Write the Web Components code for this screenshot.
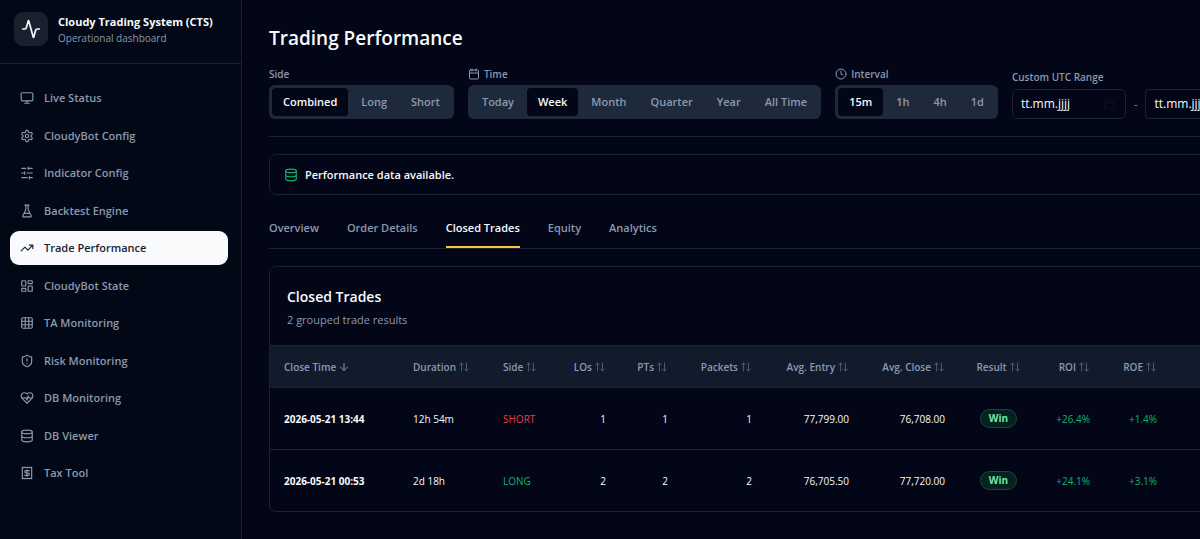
<!DOCTYPE html>
<html lang="en">
<head>
<meta charset="utf-8">
<meta name="viewport" content="width=device-width, initial-scale=1">
<title>Cloudy Trading System</title>
<style>
  :root {
    --bg: #020617;
    --side-bg: #020815;
    --line: #1b2333;
    --raised: #1e293b;
    --head-bg: #121b2b;
    --text: #f8fafc;
    --muted: #8b99af;
    --green: #10b370;
    --red: #e8393f;
    --accent: #f5c842;
  }
  html, body { height: 100%; }
  body {
    margin: 0;
    background: var(--bg);
    color: var(--text);
    font: 400 11px/18px "Open Sans", "Noto Sans", sans-serif;
    overflow: hidden;
  }
</style>
</head>
<body>
<app-shell>
  <side-nav slot="side">
    <nav-item icon="monitor">Live Status</nav-item>
    <nav-item icon="settings">CloudyBot Config</nav-item>
    <nav-item icon="sliders">Indicator Config</nav-item>
    <nav-item icon="flask">Backtest Engine</nav-item>
    <nav-item icon="trending" active>Trade Performance</nav-item>
    <nav-item icon="dashboard">CloudyBot State</nav-item>
    <nav-item icon="grid">TA Monitoring</nav-item>
    <nav-item icon="shield">Risk Monitoring</nav-item>
    <nav-item icon="heart">DB Monitoring</nav-item>
    <nav-item icon="database">DB Viewer</nav-item>
    <nav-item icon="receipt">Tax Tool</nav-item>
  </side-nav>
  <page-header>
    <span slot="title">Trading Performance</span>
    <segment-group label="Side" options="Combined,Long,Short" selected="Combined"></segment-group>
    <segment-group label="Time" icon="calendar" options="Today,Week,Month,Quarter,Year,All Time" selected="Week"></segment-group>
    <segment-group label="Interval" icon="clock" options="15m,1h,4h,1d" selected="15m"></segment-group>
    <date-range label="Custom UTC Range"></date-range>
  </page-header>
  <status-banner icon="database">Performance data available.</status-banner>
  <tab-bar tabs="Overview,Order Details,Closed Trades,Equity,Analytics" selected="Closed Trades"></tab-bar>
  <data-card>
    <span slot="title">Closed Trades</span>
    <span slot="subtitle">2 grouped trade results</span>
    <trades-table></trades-table>
  </data-card>
</app-shell>

<script>
const ICONS = {
  activity: '<path d="M22 12h-2.48a2 2 0 0 0-1.93 1.46l-2.35 8.36a.25.25 0 0 1-.48 0L9.24 2.18a.25.25 0 0 0-.48 0l-2.35 8.36A2 2 0 0 1 4.49 12H2"/>',
  monitor: '<rect width="20" height="14" x="2" y="3" rx="2"/><path d="M8 21h8M12 17v4"/>',
  settings: '<path d="M12.22 2h-.44a2 2 0 0 0-2 2v.18a2 2 0 0 1-1 1.73l-.43.25a2 2 0 0 1-2 0l-.15-.08a2 2 0 0 0-2.73.73l-.22.38a2 2 0 0 0 .73 2.73l.15.1a2 2 0 0 1 1 1.72v.51a2 2 0 0 1-1 1.74l-.15.09a2 2 0 0 0-.73 2.73l.22.38a2 2 0 0 0 2.73.73l.15-.08a2 2 0 0 1 2 0l.43.25a2 2 0 0 1 1 1.73V20a2 2 0 0 0 2 2h.44a2 2 0 0 0 2-2v-.18a2 2 0 0 1 1-1.73l.43-.25a2 2 0 0 1 2 0l.15.08a2 2 0 0 0 2.73-.73l.22-.39a2 2 0 0 0-.73-2.73l-.15-.08a2 2 0 0 1-1-1.74v-.5a2 2 0 0 1 1-1.74l.15-.09a2 2 0 0 0 .73-2.73l-.22-.38a2 2 0 0 0-2.73-.73l-.15.08a2 2 0 0 1-2 0l-.43-.25a2 2 0 0 1-1-1.73V4a2 2 0 0 0-2-2z"/><circle cx="12" cy="12" r="3"/>',
  sliders: '<path d="M21 4h-7M10 4H3M21 12h-9M8 12H3M21 20h-5M12 20H3M14 2v4M8 10v4M16 18v4"/>',
  flask: '<path d="M10 2v7.53a2 2 0 0 1-.21.9L4.72 20.55a1 1 0 0 0 .9 1.45h12.76a1 1 0 0 0 .9-1.45l-5.07-10.13a2 2 0 0 1-.21-.9V2M8.5 2h7M7 16h10"/>',
  trending: '<path d="m22 7-8.5 8.5-5-5L2 17M16 7h6v6"/>',
  dashboard: '<rect width="7" height="9" x="3" y="3" rx="1"/><rect width="7" height="5" x="14" y="3" rx="1"/><rect width="7" height="9" x="14" y="12" rx="1"/><rect width="7" height="5" x="3" y="16" rx="1"/>',
  grid: '<rect width="18" height="18" x="3" y="3" rx="2"/><path d="M3 9h18M3 15h18M9 3v18M15 3v18"/>',
  shield: '<path d="M20 13c0 5-3.5 7.5-7.66 8.95a1 1 0 0 1-.67-.01C7.5 20.5 4 18 4 13V6a1 1 0 0 1 1-1c2 0 4.5-1.2 6.24-2.72a1.17 1.17 0 0 1 1.52 0C14.51 3.81 17 5 19 5a1 1 0 0 1 1 1zM12 8v4M12 16h.01"/>',
  heart: '<path d="M19 14c1.49-1.46 3-3.21 3-5.5A5.5 5.5 0 0 0 16.5 3c-1.76 0-3 .5-4.5 2-1.5-1.5-2.74-2-4.5-2A5.5 5.5 0 0 0 2 8.5c0 2.3 1.5 4.05 3 5.5l7 7Z"/><path d="M3.22 12H9.5l.5-1 2 4.5 2-7 1.5 3.5h5.27"/>',
  database: '<ellipse cx="12" cy="5" rx="9" ry="3"/><path d="M3 5v14a9 3 0 0 0 18 0V5M3 12a9 3 0 0 0 18 0"/>',
  receipt: '<path d="M4 2v20l2-1 2 1 2-1 2 1 2-1 2 1 2-1 2 1V2l-2 1-2-1-2 1-2-1-2 1-2-1-2 1ZM16 8h-6a2 2 0 1 0 0 4h4a2 2 0 1 1 0 4H8M12 17.5v-11"/>',
  calendar: '<path d="M8 2v4M16 2v4M3 10h18"/><rect width="18" height="18" x="3" y="4" rx="2"/>',
  clock: '<circle cx="12" cy="12" r="10"/><path d="M12 6v6l4 2"/>',
  sort: '<path d="m21 16-4 4-4-4M17 20V4M3 8l4-4 4 4M7 4v16"/>',
  down: '<path d="M12 5v14M19 12l-7 7-7-7"/>'
};

class Base extends HTMLElement {
  connectedCallback() {
    if (this.shadowRoot) return;
    this.attachShadow({ mode: 'open' }).innerHTML =
      '<style>:host,*{box-sizing:border-box}button,input{font:inherit;color:inherit}' + this.css() + '</style>' + this.html();
  }
  list(name) { return this.getAttribute(name).split(','); }
}

customElements.define('ui-icon', class extends Base {
  css() { return `
    :host { display: inline-flex; flex: none; width: 14px; height: 14px; }
    svg { width: 100%; height: 100%; fill: none; stroke: currentColor; stroke-width: 2; stroke-linecap: round; stroke-linejoin: round; }`; }
  html() { return `<svg viewBox="0 0 24 24" aria-hidden="true">${ICONS[this.getAttribute('name')]}</svg>`; }
});

customElements.define('app-shell', class extends Base {
  css() { return `
    :host { display: grid; grid-template-columns: 242px minmax(0, 1fr); min-height: 100%; }
    main { padding: 24px 0 24px 27px; overflow: hidden; }
    .wide { min-width: 1120px; }`; }
  html() { return `<slot name="side"></slot><main><div class="wide"><slot></slot></div></main>`; }
});

customElements.define('side-nav', class extends Base {
  css() { return `
    :host { display: block; background: var(--side-bg); border-right: 1px solid var(--line); }
    header { display: flex; align-items: center; gap: 10px; height: 64px; padding: 0 14px 5px; border-bottom: 1px solid var(--line); }
    .logo { display: grid; place-items: center; width: 34px; height: 34px; border-radius: 9px; background: #1a202d; }
    .logo ui-icon { width: 20px; height: 20px; }
    .brand { display: grid; padding-top: 2px; white-space: nowrap; line-height: 16px; }
    strong { font-size: 11px; font-weight: 700; }
    small { font-size: 10px; color: var(--muted); }
    nav { display: grid; align-content: space-between; height: 409px; margin: 17px 13px 0 10px; }`; }
  html() { return `
    <header><span class="logo"><ui-icon name="activity"></ui-icon></span>
      <span class="brand"><strong>Cloudy Trading System (CTS)</strong><small>Operational dashboard</small></span></header>
    <nav><slot></slot></nav>`; }
});

customElements.define('nav-item', class extends Base {
  css() { return `
    :host { display: block; }
    a { display: flex; align-items: center; gap: 10px; height: 34px; padding: 0 10px; border-radius: 9px;
        color: var(--muted); font-weight: 600; text-decoration: none; white-space: nowrap; }
    :host([active]) a { background: var(--text); color: #1b2436; }`; }
  html() { return `<a href="#"${this.hasAttribute('active') ? ' aria-current="page"' : ''}><ui-icon name="${this.getAttribute('icon')}"></ui-icon><span><slot></slot></span></a>`; }
});

customElements.define('page-header', class extends Base {
  css() { return `
    :host { display: block; border-bottom: 1px solid var(--line); padding-bottom: 17px; }
    h1 { margin: 0 0 14px; font-size: 19px; line-height: 29px; font-weight: 600; }
    .filters { display: flex; align-items: flex-end; gap: 14px; }`; }
  html() { return `<h1><slot name="title"></slot></h1><div class="filters"><slot></slot></div>`; }
});

customElements.define('segment-group', class extends Base {
  css() { return `
    :host { display: grid; gap: 4px; flex: none; }
    .label { display: flex; align-items: center; gap: 4px; height: 14px; font-size: 10px; font-weight: 600; color: var(--muted); }
    .label ui-icon { width: 12px; height: 12px; }
    .group { display: flex; gap: 2px; padding: 3px; border-radius: 6px; background: var(--raised); }
    button { height: 28px; padding: 0 11px; border: 0; border-radius: 4px; background: none; color: var(--muted); font-weight: 600; white-space: nowrap; }
    button[aria-pressed=true] { background: var(--bg); color: var(--text); }`; }
  html() {
    const icon = this.getAttribute('icon'), sel = this.getAttribute('selected');
    return `<span class="label" id="l">${icon ? `<ui-icon name="${icon}"></ui-icon>` : ''}<span>${this.getAttribute('label')}</span></span>
      <div class="group" role="group" aria-labelledby="l">${this.list('options').map(o => `<button type="button" aria-pressed="${o === sel}">${o}</button>`).join('')}</div>`;
  }
});

customElements.define('date-range', class extends Base {
  css() { return `
    :host { display: grid; gap: 4px; flex: none; }
    label { font-size: 10px; line-height: 16px; font-weight: 600; color: var(--muted); }
    .row { display: flex; align-items: center; gap: 8px; color: var(--muted); }
    .field { display: flex; align-items: center; width: 114px; height: 30px; padding: 0 10px 0 8px; border: 1px solid var(--line); border-radius: 5px; color: #0f1115; }
    .field ui-icon { width: 12px; height: 12px; }
    input { flex: 1; min-width: 0; padding: 0; border: 0; outline: 0; background: none; color: var(--text); font-size: 12px; }`; }
  html() {
    const field = (id, name) => `<span class="field"><input id="${id}" type="text" inputmode="numeric" aria-label="${name}" value="tt.mm.jjjj"><ui-icon name="calendar"></ui-icon></span>`;
    return `<label for="from">${this.getAttribute('label')}</label><div class="row">${field('from', 'From')}<span>-</span>${field('to', 'To')}</div>`;
  }
});

customElements.define('status-banner', class extends Base {
  css() { return `
    :host { display: flex; align-items: center; gap: 7px; height: 41px; margin-top: 17px; padding: 0 14px; border: 1px solid var(--line); border-radius: 7px; font-weight: 600; }
    ui-icon { color: var(--green); }`; }
  html() { return `<ui-icon name="${this.getAttribute('icon')}"></ui-icon><span role="status"><slot></slot></span>`; }
});

customElements.define('tab-bar', class extends Base {
  css() { return `
    :host { display: flex; gap: 28px; margin-top: 12px; border-bottom: 1px solid var(--line); }
    button { height: 41px; padding: 2px 0 0; border: 0; border-bottom: 2px solid transparent; background: none; color: var(--muted); font-weight: 600; white-space: nowrap; }
    button[aria-selected=true] { color: var(--text); border-color: var(--accent); }`; }
  html() { return this.list('tabs').map(t => `<button type="button" role="tab" aria-selected="${t === this.getAttribute('selected')}">${t}</button>`).join(''); }
});

customElements.define('data-card', class extends Base {
  css() { return `
    :host { display: block; margin-top: 17px; border: 1px solid var(--line); border-radius: 7px; overflow: hidden; }
    header { padding: 18px 17px 16px; }
    h2 { margin: 0; font-size: 14px; line-height: 24px; font-weight: 600; }
    p { margin: 2px 0 0; color: var(--muted); }`; }
  html() { return `<header><h2><slot name="title"></slot></h2><p><slot name="subtitle"></slot></p></header><slot></slot>`; }
});

const COLUMNS = [
  ['Close Time', 129, ''], ['Duration', 90, ''], ['Side', 62, ''], ['LOs', 69, 'num'], ['PTs', 62, 'num'], ['Packets', 84, 'num'],
  ['Avg. Entry', 97, 'num'], ['Avg. Close', 96, 'num'], ['Result', 79, 'mid'], ['ROI', 66, 'num'], ['ROE', 67, 'num']
];
const TRADES = [
  ['2026-05-21 13:44', '12h 54m', 'SHORT', '1', '1', '1', '77,799.00', '76,708.00', 'Win', '+26.4%', '+1.4%'],
  ['2026-05-21 00:53', '2d 18h', 'LONG', '2', '2', '2', '76,705.50', '77,720.00', 'Win', '+24.1%', '+3.1%']
];

customElements.define('trades-table', class extends Base {
  css() { return `
    :host { display: block; }
    table { width: 100%; table-layout: fixed; border-collapse: separate; border-spacing: 0; font-size: 10px; }
    th, td { padding: 0 14px; text-align: left; white-space: nowrap; border-top: 1px solid var(--line); }
    th { height: 42px; background: var(--head-bg); color: var(--muted); }
    td { height: 62px; font-weight: 500; }
    .num { text-align: right; }
    .num button { float: right; }
    th button { display: inline-flex; align-items: center; gap: 2px; padding: 0; border: 0; background: none; font-weight: 600; vertical-align: middle; }
    .mid { padding: 0; text-align: center; }
    th ui-icon { width: 12px; height: 12px; opacity: .5; }
    th[aria-sort] ui-icon { opacity: 1; }
    td:first-child { font-weight: 700; }
    .gain { color: var(--green); }
    .loss { color: var(--red); }
    .pill { display: inline-block; padding: 0 8px; border: 1px solid #134a3c; border-radius: 10px; background: #04221f; color: #74e8a9; font-size: 10px; font-weight: 700; line-height: 17px; }`; }
  html() {
    const tone = (v, i) => i === 2 ? (v === 'LONG' ? 'gain' : 'loss') : i > 8 ? 'gain' : '';
    return `<table><colgroup>${COLUMNS.map(c => `<col style="width:${c[1]}px">`).join('')}<col></colgroup>
      <thead><tr>${COLUMNS.map((c, i) => `<th scope="col" class="${c[2]}"${i ? '' : ' aria-sort="descending"'}><button type="button">${c[0]}<ui-icon name="${i ? 'sort' : 'down'}"></ui-icon></button></th>`).join('')}<th></th></tr></thead>
      <tbody>${TRADES.map(r => `<tr>${r.map((v, i) => `<td class="${COLUMNS[i][2]} ${tone(v, i)}">${i === 8 ? `<span class="pill">${v}</span>` : v}</td>`).join('')}<td></td></tr>`).join('')}</tbody></table>`;
  }
});
</script>
</body>
</html>
